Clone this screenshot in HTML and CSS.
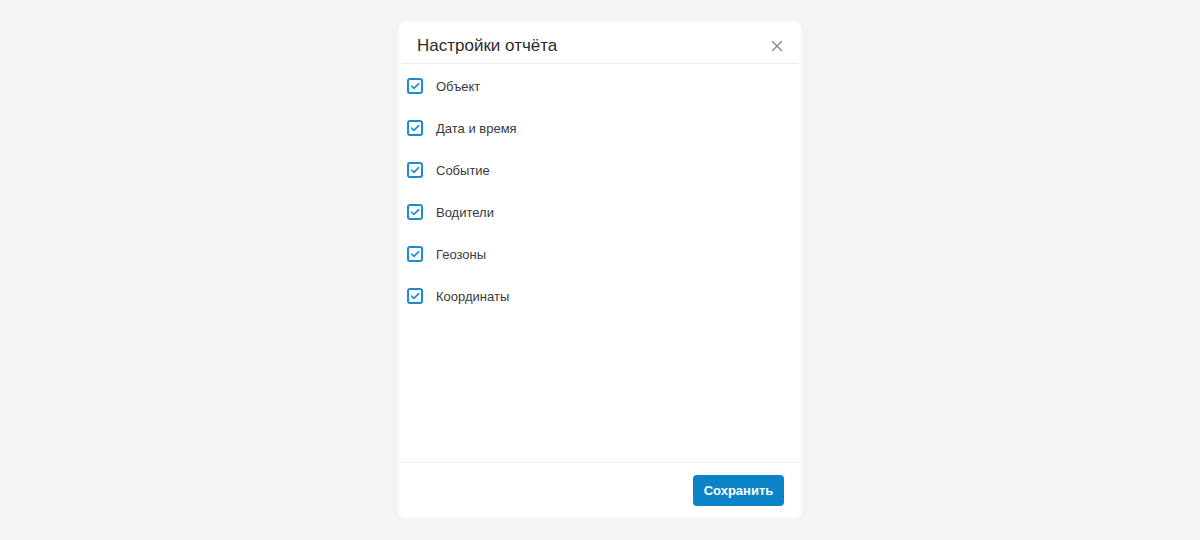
FILE: index.html
```html
<!DOCTYPE html>
<html lang="ru">
<head>
    <meta charset="utf-8">
    <title>Настройки отчёта</title>
    <link rel="stylesheet" href="styles.css">
</head>
<body>

<div class="modal">
    <div class="modal-header">
        <h2 class="modal-title">Настройки отчёта</h2>
        <button class="modal-close" type="button" aria-label="Закрыть">
            <svg width="12" height="12" viewBox="0 0 12 12"><path d="M1.5 1.5l9 9M10.5 1.5l-9 9" stroke="currentColor" stroke-width="1.5" stroke-linecap="round"/></svg>
        </button>
    </div>

    <div class="modal-body">
        <label class="option"><span class="check"><svg width="10" height="8" viewBox="0 0 10 8"><path d="M1.5 4l2.5 2.4L8.6 1.6" fill="none" stroke="currentColor" stroke-width="1.6" stroke-linecap="round" stroke-linejoin="round"/></svg></span>Объект</label>
        <label class="option"><span class="check"><svg width="10" height="8" viewBox="0 0 10 8"><path d="M1.5 4l2.5 2.4L8.6 1.6" fill="none" stroke="currentColor" stroke-width="1.6" stroke-linecap="round" stroke-linejoin="round"/></svg></span>Дата и время</label>
        <label class="option"><span class="check"><svg width="10" height="8" viewBox="0 0 10 8"><path d="M1.5 4l2.5 2.4L8.6 1.6" fill="none" stroke="currentColor" stroke-width="1.6" stroke-linecap="round" stroke-linejoin="round"/></svg></span>Событие</label>
        <label class="option"><span class="check"><svg width="10" height="8" viewBox="0 0 10 8"><path d="M1.5 4l2.5 2.4L8.6 1.6" fill="none" stroke="currentColor" stroke-width="1.6" stroke-linecap="round" stroke-linejoin="round"/></svg></span>Водители</label>
        <label class="option"><span class="check"><svg width="10" height="8" viewBox="0 0 10 8"><path d="M1.5 4l2.5 2.4L8.6 1.6" fill="none" stroke="currentColor" stroke-width="1.6" stroke-linecap="round" stroke-linejoin="round"/></svg></span>Геозоны</label>
        <label class="option"><span class="check"><svg width="10" height="8" viewBox="0 0 10 8"><path d="M1.5 4l2.5 2.4L8.6 1.6" fill="none" stroke="currentColor" stroke-width="1.6" stroke-linecap="round" stroke-linejoin="round"/></svg></span>Координаты</label>
    </div>

    <div class="modal-footer">
        <button class="btn-primary" type="button">Сохранить</button>
    </div>
</div>

</body>
</html>
```

FILE: styles.css
```css
body { margin: 0; background-color: #f4f4f4; font-family: "Liberation Sans", Arial, sans-serif; color: #333; }

.modal { width: 402px; height: 496px; margin: 22px auto 0; background-color: #fff; border-radius: 6px; display: flex; flex-direction: column; }

.modal-header { height: 42px; margin: 0 3px; padding: 6px 15px 0; box-sizing: border-box; border-bottom: 1px solid #ececec; display: flex; align-items: center; justify-content: space-between; }
.modal-title { margin: 0; font-size: 17px; font-weight: 400; color: #2b2b2b; }
.modal-close { border: 0; background: none; padding: 0; color: #8d8d8d; display: flex; cursor: pointer; }

.modal-body { flex: 1; padding: 1px 8px 0; display: flex; flex-direction: column; }
.option { height: 42px; display: flex; align-items: center; gap: 13px; font-size: 13px; color: #3a3a3a; cursor: pointer; }
.check { width: 16px; height: 16px; box-sizing: border-box; border: 2px solid #1f8bd3; border-radius: 3px; color: #1f8bd3; display: flex; align-items: center; justify-content: center; }

.modal-footer { height: 55px; margin: 0 3px; padding: 0 14px; border-top: 1px solid #ececec; display: flex; align-items: center; justify-content: flex-end; }
.btn-primary { width: 91px; height: 31px; border: 0; border-radius: 4px; background-color: #0b84c7; color: #fff; font-family: inherit; font-size: 13px; font-weight: 700; cursor: pointer; }
```
